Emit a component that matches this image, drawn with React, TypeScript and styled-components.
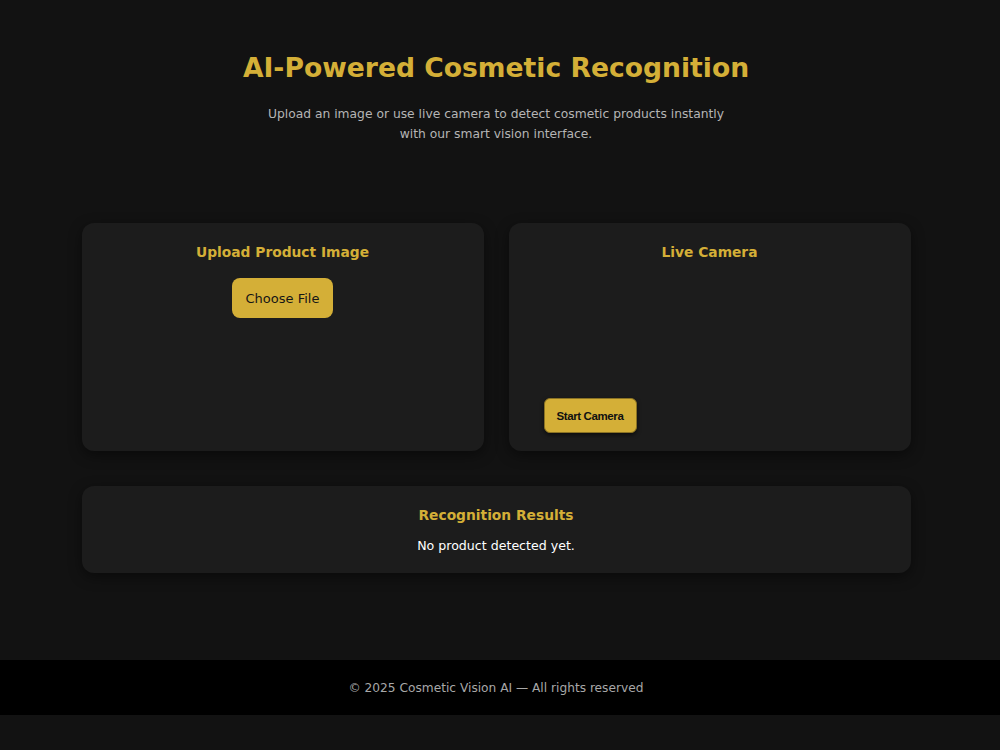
import styled, { createGlobalStyle } from "styled-components";

const GlobalStyle = createGlobalStyle`
  * { box-sizing: border-box; }
  body {
    margin: 0;
    background-color: #121212;
    color: #f0f0f0;
    font-family: "DejaVu Sans", "Open Sans", sans-serif;
  }
`

const gold = "#d4af37"

// the page in the shot is centred on 496px (room for a scrollbar)
const StyledPage = styled.div`
  display: flex;
  flex-direction: column;
  min-height: 750px;
`

const StyledContent = styled.div`
  padding-right: 8px;
`

const StyledHeader = styled.header`
  display: flex;
  flex-direction: column;
  align-items: center;
  padding: 48px 0 0;
  text-align: center;
`

const StyledTitle = styled.h1`
  margin: 0;
  font-size: 26.6px;
  line-height: 40px;
  font-weight: 700;
  color: ${gold};
`

const StyledSubtitle = styled.p`
  margin: 16px 0 0;
  max-width: 480px;
  font-size: 12.3px;
  line-height: 20px;
  color: #b5b5b5;
`

const StyledMain = styled.main`
  display: flex;
  flex-direction: column;
  gap: 35px;
  width: 829px;
  margin: 79px auto 87px;
`

const CardGrid = styled.div`
  display: grid;
  grid-template-columns: 1fr 1fr;
  gap: 25px;
`

const StyledCard = styled.section<{ $padding?: string }>`
  display: flex;
  flex-direction: column;
  align-items: center;
  padding: ${({ $padding }) => $padding || "19px 24px 18px"};
  background-color: #1c1c1c;
  border-radius: 12px;
  box-shadow: 0 4px 14px rgba(0, 0, 0, 0.45);
`

const CardTitle = styled.h2`
  margin: 0;
  font-size: 13.8px;
  line-height: 20px;
  font-weight: 700;
  color: ${gold};
`

const ChooseButton = styled.label`
  margin-top: 16px;
  padding: 0 14px;
  height: 40px;
  display: flex;
  align-items: center;
  background-color: ${gold};
  color: #161616;
  font-size: 13px;
  font-weight: 400;
  border-radius: 8px;
  cursor: pointer;
`

const VideoBox = styled.div`
  width: 100%;
  height: 104px;
  margin: 16px 0;
`

const CameraButton = styled.button`
  align-self: flex-start;
  margin-left: 11px;
  width: 93px;
  height: 35px;
  border: 1px solid #8a7224;
  border-radius: 6px;
  background-color: ${gold};
  color: #111;
  font-family: "Liberation Sans", Arial, sans-serif;
  font-size: 11.5px;
  font-weight: 700;
  letter-spacing: -0.4px;
  box-shadow: 0 2px 4px rgba(0, 0, 0, 0.6);
  cursor: pointer;
`

const ResultText = styled.p`
  margin: 11px 0 0;
  font-size: 12.6px;
  line-height: 20px;
  color: #ffffff;
`

const StyledFooter = styled.footer`
  display: flex;
  align-items: center;
  justify-content: center;
  height: 55px;
  padding-right: 8px;
  background-color: #000;
  color: #a8a8a8;
  font-size: 12.2px;
`

export default function App() {
  return (
    <StyledPage>
      <GlobalStyle />
      <StyledContent>
        <StyledHeader>
          <StyledTitle>AI-Powered Cosmetic Recognition</StyledTitle>
          <StyledSubtitle>
            Upload an image or use live camera to detect cosmetic products instantly with our smart vision interface.
          </StyledSubtitle>
        </StyledHeader>

        <StyledMain>
          <CardGrid>
            <StyledCard>
              <CardTitle>Upload Product Image</CardTitle>
              <ChooseButton>Choose File</ChooseButton>
            </StyledCard>
            <StyledCard>
              <CardTitle>Live Camera</CardTitle>
              <VideoBox />
              <CameraButton>Start Camera</CameraButton>
            </StyledCard>
          </CardGrid>

          <StyledCard $padding="19px 24px 17px">
            <CardTitle>Recognition Results</CardTitle>
            <ResultText>No product detected yet.</ResultText>
          </StyledCard>
        </StyledMain>
      </StyledContent>

      <StyledFooter>© 2025 Cosmetic Vision AI — All rights reserved</StyledFooter>
    </StyledPage>
  )
}
